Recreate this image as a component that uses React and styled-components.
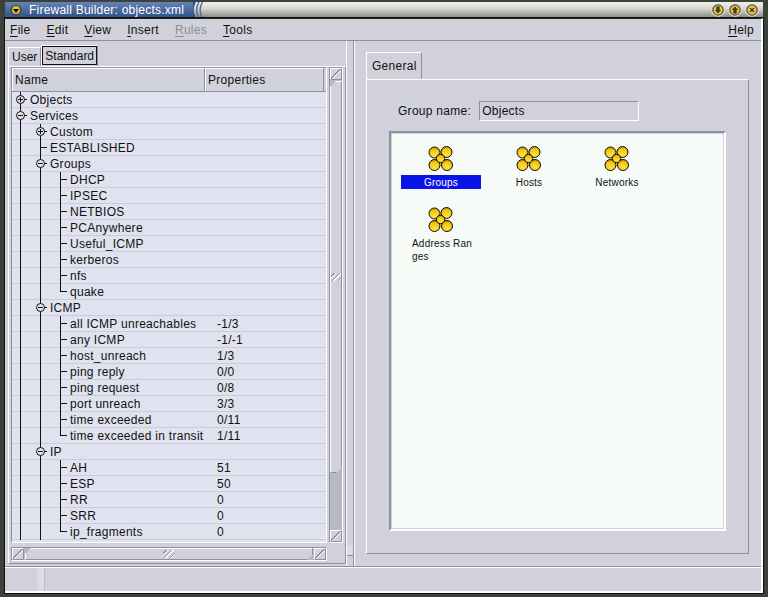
import styled, { createGlobalStyle } from 'styled-components';

const GlobalStyle = createGlobalStyle`
  html, body {
    margin: 0;
    padding: 0;
    background: #3c413c;
  }
  body {
    font-family: "Liberation Sans", Arial, sans-serif;
    font-size: 12px;
    letter-spacing: 0.28px;
    color: #111;
  }
`;

const Screen = styled.div`
  width: 768px;
  height: 597px;
  box-sizing: border-box;
  padding: 2px 5px 4px 5px;
  display: flex;
  flex-direction: column;
  overflow: hidden;
  background: #3c413c;
`;

const TitleBar = styled.div`
  height: 16px;
  flex: none;
  display: flex;
  align-items: center;
  background: linear-gradient(#f1f1ea, #d8d8d0 40%, #85867e);
`;

const TitleBlue = styled.div`
  width: 188px;
  height: 100%;
  flex: none;
  display: flex;
  align-items: center;
  gap: 7px;
  padding-left: 5px;
  box-sizing: border-box;
  color: #fff;
  background: linear-gradient(#6583b3, #2f5089);
  letter-spacing: 0.22px;
`;

const TitleSpacer = styled.div`
  flex: 1;
`;

const TitleButtons = styled.div`
  display: flex;
  gap: 3px;
  padding-right: 4px;
`;

const Window = styled.div`
  flex: 1;
  display: flex;
  flex-direction: column;
  min-height: 0;
  background: #d0d1da;
  border-top: 1px solid #222;
  border-right: 2px solid #fff;
  border-bottom: 2px solid #fff;
  outline: 1px solid #111;
`;

const MenuBar = styled.div`
  height: 21px;
  flex: none;
  display: flex;
  align-items: center;
  padding: 0 5px;
  gap: 16px;
  border-bottom: 1px solid #8e8fa0;
`;

const MenuItem = styled.span`
  color: ${p => (p.$disabled ? '#8b8c96' : '#111')};
  margin-left: ${p => (p.$right ? 'auto' : '0')};
  margin-right: ${p => (p.$right ? '2px' : '0')};
  u {
    text-underline-offset: 2px;
  }
`;

const Panes = styled.div`
  flex: 1;
  display: flex;
  min-height: 0;
  border-bottom: 1px solid #8e8fa0;
`;

const LeftPane = styled.div`
  width: 341px;
  flex: none;
  display: flex;
  flex-direction: column;
  padding: 3px 0 2px 3px;
  box-sizing: border-box;
`;

const TabStrip = styled.div`
  height: 22px;
  flex: none;
  display: flex;
  align-items: flex-end;
`;

const SmallTab = styled.div`
  height: ${p => (p.$active ? '21px' : '19px')};
  box-sizing: border-box;
  padding: 0 3px;
  display: flex;
  align-items: center;
  letter-spacing: 0;
  border-top: 1px solid #fff;
  border-left: 1px solid #fff;
  border-right: 1px solid #8e8fa0;
  outline: ${p => (p.$active ? '1px solid #111' : 'none')};
  outline-offset: -2px;
`;

const TabFrame = styled.div`
  flex: 1;
  min-height: 0;
  display: grid;
  grid-template-columns: 316px 14px;
  grid-template-rows: 1fr 14px;
  gap: 4px 2px;
  padding: 0 3px 2px 2px;
  border: 1px solid #8e8fa0;
  border-top-color: #fff;
  border-left-color: #fff;
`;

const ListView = styled.div`
  min-height: 0;
  overflow: hidden;
  background: #e0e3ef;
  border: 1px solid #8e8fa0;
  border-right-color: #fff;
  border-bottom-color: #fff;
`;

const ListHeader = styled.div`
  height: 23px;
  display: flex;
  background: #d0d1da;
  border-bottom: 1px solid #8e8fa0;
`;

const HeaderCell = styled.div`
  width: ${p => p.$width}px;
  box-sizing: border-box;
  padding-left: 2px;
  display: flex;
  align-items: center;
  border-top: 1px solid #fff;
  border-left: 1px solid #fff;
  border-right: 1px solid #8e8fa0;
`;

const Row = styled.div`
  height: 16px;
  box-sizing: border-box;
  display: flex;
  line-height: 16px;
  border-bottom: 1px solid #c9ccd9;
`;

const NameCell = styled.div`
  width: 204px;
  flex: none;
  display: flex;
  white-space: nowrap;
`;

const ValueCell = styled.div`
  padding-left: 1px;
`;

const Slot = styled.div`
  position: relative;
  width: 20px;
  height: 16px;
  flex: none;

  &:first-child {
    width: 18px;
  }

  &:first-child svg {
    margin-left: -2px;
  }

  &::before {
    content: '';
    display: ${p => (p.$kind === 'pass' || p.$kind === 'tee' || p.$kind === 'end' ? 'block' : 'none')};
    position: absolute;
    right: 9px;
    top: 0;
    width: 1px;
    height: ${p => (p.$kind === 'end' ? '8px' : '16px')};
    background: #111;
  }

  &::after {
    content: '';
    display: ${p => (p.$kind === 'tee' || p.$kind === 'end' ? 'block' : 'none')};
    position: absolute;
    right: 3px;
    top: 7px;
    width: 6px;
    height: 1px;
    background: #111;
  }
`;

const NodeMark = styled.svg`
  display: block;
`;

const ScrollBarY = styled.div`
  display: flex;
  flex-direction: column;
  gap: 1px;
  min-height: 0;
  background: #b8b9c4;
  border: 1px solid #8e8fa0;
  border-right-color: #fff;
  border-bottom-color: #fff;
  grid-row: 1;
  grid-column: 2;
`;

const ScrollBarX = styled.div`
  display: flex;
  gap: 1px;
  background: #b8b9c4;
  border: 1px solid #8e8fa0;
  border-right-color: #fff;
  border-bottom-color: #fff;
  grid-row: 2;
  grid-column: 1;
`;

const ArrowButton = styled.div`
  width: 12px;
  height: 12px;
  flex: none;
  box-sizing: border-box;
  background: linear-gradient(135deg, #d0d1da 44%, #8e8fa0 44%, #8e8fa0 52%, #fff 52%, #fff 58%, #d0d1da 58%);
  border: 1px solid #fff;
  border-right-color: #8e8fa0;
  border-bottom-color: #8e8fa0;
`;

const Slider = styled.div`
  flex: ${p => (p.$size ? 'none' : 1)};
  ${p => (p.$size ? `height: ${p.$size}px;` : '')}
  box-sizing: border-box;
  display: flex;
  align-items: center;
  justify-content: center;
  background: #d0d1da;
  border: 1px solid #fff;
  border-right-color: #8e8fa0;
  border-bottom-color: #8e8fa0;
  clip-path: polygon(6px 0, 100% 0, 100% calc(100% - 6px), calc(100% - 6px) 100%, 0 100%, 0 6px);
`;

const Track = styled.div`
  flex: 1;
`;

const Grip = styled.div`
  width: 12px;
  height: 8px;
  background: repeating-linear-gradient(135deg, transparent 0 2px, #8e8fa0 2px 3px, #fff 3px 4px);
`;

const Splitter = styled.div`
  width: 8px;
  flex: none;
  box-sizing: border-box;
  display: flex;
  align-items: flex-end;
  padding-bottom: 10px;
  border-left: 1px solid #fff;
  border-right: 1px solid #8e8fa0;
`;

const SplitHandle = styled.div`
  width: 6px;
  height: 10px;
  background: #dcdde4;
  border-bottom: 1px solid #8e8fa0;
`;

const RightPane = styled.div`
  flex: 1;
  display: flex;
  flex-direction: column;
  padding: 11px 12px 12px 11px;
  min-width: 0;
  border-left: 1px solid #fff;
`;

const GeneralTab = styled.div`
  width: 56px;
  height: 27px;
  flex: none;
  box-sizing: border-box;
  padding-left: 5px;
  display: flex;
  align-items: center;
  border-top: 1px solid #fff;
  border-left: 1px solid #fff;
  border-right: 1px solid #8e8fa0;
`;

const GeneralFrame = styled.div`
  flex: 1;
  min-height: 0;
  display: flex;
  flex-direction: column;
  padding: 21px 22px 22px 22px;
  border: 1px solid #8e8fa0;
  border-top-color: #fff;
  border-left-color: #fff;
`;

const NameRow = styled.div`
  display: flex;
  align-items: center;
  height: 20px;
  padding-left: 9px;
  gap: 8px;
  flex: none;
`;

const NameInput = styled.div`
  width: 160px;
  height: 20px;
  box-sizing: border-box;
  padding-left: 2px;
  display: flex;
  align-items: center;
  border: 1px solid #8e8fa0;
  border-right-color: #fff;
  border-bottom-color: #fff;
`;

const IconPanel = styled.div`
  flex: 1;
  min-height: 0;
  margin-top: 10px;
  box-sizing: border-box;
  padding: 13px 0 0 10px;
  background: #f7fbf8;
  border: 2px solid #8e8fa0;
  border-right-color: #fff;
  border-bottom-color: #fff;
  outline: 1px solid #d0d1da;
  outline-offset: -3px;
  display: grid;
  grid-template-columns: repeat(3, 88px);
  grid-auto-rows: 61px;
  align-content: start;
`;

const IconItem = styled.div`
  width: 80px;
  display: flex;
  flex-direction: column;
  align-items: center;
`;

const IconLabel = styled.div`
  width: 80px;
  box-sizing: border-box;
  margin-top: 3px;
  padding: 1px 11px 0;
  min-height: 14px;
  line-height: 13px;
  font-size: 10px;
  letter-spacing: 0.2px;
  text-align: center;
  color: ${p => (p.$selected ? '#fff' : '#111')};
  background: ${p => (p.$selected ? '#0a14e8' : 'transparent')};
`;

const BreakLabel = styled.span`
  display: block;
  text-align: left;
  white-space: nowrap;
`;

const StatusBar = styled.div`
  height: 24px;
  flex: none;
  display: flex;
  padding-left: 32px;
  border-top: 1px solid #fff;
  box-sizing: border-box;
`;

const StatusGrip = styled.div`
  width: 7px;
  background: #dcdde4;
  border-right: 1px solid #bcbdc8;
`;

const rows = [
  { name: 'Objects', node: 'plus', path: [] },
  { name: 'Services', node: 'minus', path: [] },
  { name: 'Custom', node: 'plus', path: ['pass'] },
  { name: 'ESTABLISHED', path: ['pass', 'tee'] },
  { name: 'Groups', node: 'minus', path: ['pass'] },
  { name: 'DHCP', path: ['pass', 'pass', 'tee'] },
  { name: 'IPSEC', path: ['pass', 'pass', 'tee'] },
  { name: 'NETBIOS', path: ['pass', 'pass', 'tee'] },
  { name: 'PCAnywhere', path: ['pass', 'pass', 'tee'] },
  { name: 'Useful_ICMP', path: ['pass', 'pass', 'tee'] },
  { name: 'kerberos', path: ['pass', 'pass', 'tee'] },
  { name: 'nfs', path: ['pass', 'pass', 'tee'] },
  { name: 'quake', path: ['pass', 'pass', 'end'] },
  { name: 'ICMP', node: 'minus', path: ['pass'] },
  { name: 'all ICMP unreachables', value: '-1/3', path: ['pass', 'pass', 'tee'] },
  { name: 'any ICMP', value: '-1/-1', path: ['pass', 'pass', 'tee'] },
  { name: 'host_unreach', value: '1/3', path: ['pass', 'pass', 'tee'] },
  { name: 'ping reply', value: '0/0', path: ['pass', 'pass', 'tee'] },
  { name: 'ping request', value: '0/8', path: ['pass', 'pass', 'tee'] },
  { name: 'port unreach', value: '3/3', path: ['pass', 'pass', 'tee'] },
  { name: 'time exceeded', value: '0/11', path: ['pass', 'pass', 'tee'] },
  { name: 'time exceeded in transit', value: '1/11', path: ['pass', 'pass', 'end'] },
  { name: 'IP', node: 'minus', path: ['pass'] },
  { name: 'AH', value: '51', path: ['pass', 'pass', 'tee'] },
  { name: 'ESP', value: '50', path: ['pass', 'pass', 'tee'] },
  { name: 'RR', value: '0', path: ['pass', 'pass', 'tee'] },
  { name: 'SRR', value: '0', path: ['pass', 'pass', 'tee'] },
  { name: 'ip_fragments', value: '0', path: ['pass', 'pass', 'end'] },
];

function Node({ type }) {
  return (
    <Slot>
      <NodeMark width="20" height="16" viewBox="0 0 20 16">
        <path d="M10.5 0V16M14 7.5H17" stroke="#111" fill="none" />
        <circle cx="10.5" cy="7.5" r="4" fill="#e0e3ef" stroke="#111" />
        <path d="M8 7.5H13" stroke="#111" />
        {type === 'plus' && <path d="M10.5 5V10" stroke="#111" />}
      </NodeMark>
    </Slot>
  );
}

function TreeRow({ row }) {
  return (
    <Row>
      <NameCell>
        {row.path.map((kind, i) => <Slot key={i} $kind={kind} />)}
        {row.node && <Node type={row.node} />}
        <span>{row.name}</span>
      </NameCell>
      <ValueCell>{row.value}</ValueCell>
    </Row>
  );
}

function GroupIcon({ id }) {
  const balls = [[6.5, 6.5, 5.5], [18.5, 6, 5.5], [6.5, 19, 5.5], [19, 19, 5.5], [12.5, 12.5, 4.2]];
  return (
    <svg width="26" height="26" viewBox="0 0 26 26">
      <defs>
        <radialGradient id={id} cx="0.5" cy="0.72" r="0.75">
          <stop offset="0" stopColor="#ffe24a" />
          <stop offset="0.65" stopColor="#f2c60c" />
          <stop offset="1" stopColor="#a07a00" />
        </radialGradient>
      </defs>
      {balls.map(([cx, cy, r], i) => (
        <circle key={i} cx={cx} cy={cy} r={r} fill={`url(#${id})`} stroke="#111" />
      ))}
    </svg>
  );
}

function WindowButton({ mark }) {
  return (
    <svg width="14" height="14" viewBox="0 0 14 14">
      <circle cx="7" cy="7" r="6.8" fill="#e2e1d8" />
      <circle cx="7" cy="7" r="5.8" fill="#55544a" />
      <circle cx="7" cy="7" r="4.5" fill="#e2c64a" />
      <path d={mark} fill="#4a3c0c" />
    </svg>
  );
}

export default function App() {
  return (
    <>
      <GlobalStyle />
      <Screen>
        <TitleBar>
          <TitleBlue>
            <svg width="12" height="12" viewBox="0 0 12 12">
              <circle cx="6" cy="6" r="5.5" fill="#4a4a44" />
              <circle cx="6" cy="6" r="4" fill="#d7c23a" />
              <path d="M3 5H9L6 9Z" fill="#111" />
            </svg>
            <span>Firewall Builder: objects.xml</span>
          </TitleBlue>
          <svg width="12" height="16" viewBox="0 0 12 16">
            <path d="M0 0H3C0 5 0 11 3 16H0Z" fill="#2f5089" />
            <path d="M6 0C3 5 3 11 6 16M9.5 0C6.5 5 6.5 11 9.5 16" stroke="#4a6a9e" strokeWidth="1.4" fill="none" />
          </svg>
          <TitleSpacer />
          <TitleButtons>
            <WindowButton mark="M5.3 3.5H8.7V7H10.2L7 10.5L3.8 7H5.3Z" />
            <WindowButton mark="M5.3 10.5H8.7V7H10.2L7 3.5L3.8 7H5.3Z" />
            <WindowButton mark="M4.5 5.5L5.5 4.5L7 6L8.5 4.5L9.5 5.5L8 7L9.5 8.5L8.5 9.5L7 8L5.5 9.5L4.5 8.5L6 7Z" />
          </TitleButtons>
        </TitleBar>
        <Window>
          <MenuBar>
            <MenuItem><u>F</u>ile</MenuItem>
            <MenuItem><u>E</u>dit</MenuItem>
            <MenuItem><u>V</u>iew</MenuItem>
            <MenuItem><u>I</u>nsert</MenuItem>
            <MenuItem $disabled><u>R</u>ules</MenuItem>
            <MenuItem><u>T</u>ools</MenuItem>
            <MenuItem $right><u>H</u>elp</MenuItem>
          </MenuBar>
          <Panes>
            <LeftPane>
              <TabStrip>
                <SmallTab>User</SmallTab>
                <SmallTab $active>Standard</SmallTab>
              </TabStrip>
              <TabFrame>
                <ListView>
                  <ListHeader>
                    <HeaderCell $width={193}>Name</HeaderCell>
                    <HeaderCell $width={119}>Properties</HeaderCell>
                  </ListHeader>
                  {rows.map(row => <TreeRow key={row.name} row={row} />)}
                </ListView>
                <ScrollBarY>
                  <ArrowButton />
                  <Slider $size={392}><Grip /></Slider>
                  <Track />
                  <ArrowButton />
                </ScrollBarY>
                <ScrollBarX>
                  <ArrowButton />
                  <Slider><Grip /></Slider>
                  <ArrowButton />
                </ScrollBarX>
              </TabFrame>
            </LeftPane>
            <Splitter><SplitHandle /></Splitter>
            <RightPane>
              <GeneralTab>General</GeneralTab>
              <GeneralFrame>
                <NameRow>
                  <span>Group name:</span>
                  <NameInput>Objects</NameInput>
                </NameRow>
                <IconPanel>
                  <IconItem>
                    <GroupIcon id="ball-groups" />
                    <IconLabel $selected>Groups</IconLabel>
                  </IconItem>
                  <IconItem>
                    <GroupIcon id="ball-hosts" />
                    <IconLabel>Hosts</IconLabel>
                  </IconItem>
                  <IconItem>
                    <GroupIcon id="ball-networks" />
                    <IconLabel>Networks</IconLabel>
                  </IconItem>
                  <IconItem>
                    <GroupIcon id="ball-ranges" />
                    <IconLabel>
                      <BreakLabel>Address Ran</BreakLabel>
                      <BreakLabel>ges</BreakLabel>
                    </IconLabel>
                  </IconItem>
                </IconPanel>
              </GeneralFrame>
            </RightPane>
          </Panes>
          <StatusBar><StatusGrip /></StatusBar>
        </Window>
      </Screen>
    </>
  );
}
